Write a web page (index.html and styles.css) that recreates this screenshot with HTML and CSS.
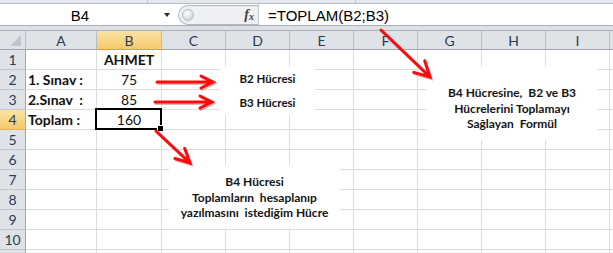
FILE: index.html
```html
<!DOCTYPE html>
<html>
<head>
<meta charset="utf-8">
<link rel="stylesheet" href="styles.css">
</head>
<body>
<div class="app">
  <div class="ribbon"><span class="rdiv d1"></span><span class="rdiv d2"></span></div>
  <div class="fbar">
    <div class="namebox"><span class="nb-text">B4</span><span class="nb-arrow"></span></div>
    <div class="fxzone"><span class="knob"></span><span class="fx"><i>f</i><sub>x</sub></span></div>
    <div class="formula">=TOPLAM(B2;B3)</div>
  </div>
  <div class="gap"></div>
  <div class="sheet">
    <div class="ch corner"><svg width="25" height="19" viewBox="0 0 25 19"><polygon points="10,15 21,15 21,4" fill="#bfc5cc"/></svg></div>
    <div class="ch">A</div><div class="ch hl">B</div><div class="ch">C</div><div class="ch">D</div><div class="ch">E</div><div class="ch">F</div><div class="ch">G</div><div class="ch">H</div><div class="ch">I</div><div class="ch last"></div>

    <div class="rh">1</div><div class="c"></div><div class="c b ctr">AHMET</div><div class="c"></div><div class="c"></div><div class="c"></div><div class="c"></div><div class="c"></div><div class="c"></div><div class="c"></div><div class="c"></div>
    <div class="rh">2</div><div class="c b">1. Sınav :</div><div class="c ctr">75</div><div class="c"></div><div class="c"></div><div class="c"></div><div class="c"></div><div class="c"></div><div class="c"></div><div class="c"></div><div class="c"></div>
    <div class="rh">3</div><div class="c b">2.Sınav  :</div><div class="c ctr">85</div><div class="c"></div><div class="c"></div><div class="c"></div><div class="c"></div><div class="c"></div><div class="c"></div><div class="c"></div><div class="c"></div>
    <div class="rh hl">4</div><div class="c b">Toplam :</div><div class="c ctr active">160<span class="sel"><span class="handle"></span></span></div><div class="c"></div><div class="c"></div><div class="c"></div><div class="c"></div><div class="c"></div><div class="c"></div><div class="c"></div><div class="c"></div>
    <div class="rh">5</div><div class="c"></div><div class="c"></div><div class="c"></div><div class="c"></div><div class="c"></div><div class="c"></div><div class="c"></div><div class="c"></div><div class="c"></div><div class="c"></div>
    <div class="rh">6</div><div class="c"></div><div class="c"></div><div class="c"></div><div class="c"></div><div class="c"></div><div class="c"></div><div class="c"></div><div class="c"></div><div class="c"></div><div class="c"></div>
    <div class="rh">7</div><div class="c"></div><div class="c"></div><div class="c"></div><div class="c"></div><div class="c"></div><div class="c"></div><div class="c"></div><div class="c"></div><div class="c"></div><div class="c"></div>
    <div class="rh">8</div><div class="c"></div><div class="c"></div><div class="c"></div><div class="c"></div><div class="c"></div><div class="c"></div><div class="c"></div><div class="c"></div><div class="c"></div><div class="c"></div>
    <div class="rh">9</div><div class="c"></div><div class="c"></div><div class="c"></div><div class="c"></div><div class="c"></div><div class="c"></div><div class="c"></div><div class="c"></div><div class="c"></div><div class="c"></div>
    <div class="rh">10</div><div class="c"></div><div class="c"></div><div class="c"></div><div class="c"></div><div class="c"></div><div class="c"></div><div class="c"></div><div class="c"></div><div class="c"></div><div class="c"></div>
    <div class="rh"></div><div class="c"></div><div class="c"></div><div class="c"></div><div class="c"></div><div class="c"></div><div class="c"></div><div class="c"></div><div class="c"></div><div class="c"></div><div class="c"></div>
  </div>

  <div class="note note-b23">B2 Hücresi
B3 Hücresi</div>
  <div class="note note-formula">B4 Hücresine,  B2 ve B3
Hücrelerini Toplamayı
Sağlayan  Formül</div>
  <div class="note note-b4">B4 Hücresi
Toplamların  hesaplanıp
yazılmasını  istediğim Hücre</div>

  <svg class="arrows" width="613" height="253" viewBox="0 0 613 253">
    <g class="shadow" transform="translate(1,1.5)">
      <path d="M381 30 L429 76 M413.7 72.4 L430 77 L424.7 60.8"/>
      <path d="M157 82 L212 82 M201 76 L213 82 L201 88"/>
      <path d="M155 102 L211 102 M200 96 L212 102 L200 108"/>
      <path d="M156 131 L189 162 M175 158.5 L190 163 L184.6 148.3"/>
    </g>
    <g class="red">
      <path d="M381 30 L429 76 M413.7 72.4 L430 77 L424.7 60.8"/>
      <path d="M157 82 L212 82 M201 76 L213 82 L201 88"/>
      <path d="M155 102 L211 102 M200 96 L212 102 L200 108"/>
      <path d="M156 131 L189 162 M175 158.5 L190 163 L184.6 148.3"/>
    </g>
  </svg>
</div>
</body>
</html>
```

FILE: styles.css
```css
html, body {
  margin: 0;
  padding: 0;
  background: #ffffff;
  overflow: hidden;
}

.app {
  position: relative;
  width: 613px;
  height: 253px;
  overflow: hidden;
  font-family: Lato, "Liberation Sans", sans-serif;
}

.ribbon {
  height: 3px;
  background: #e4e7eb;
  border-bottom: 1px solid #b7bcc4;
  display: flex;
}

.rdiv {
  width: 1px;
  height: 3px;
  background: #c3c8cf;
}

.d1 { margin-left: 147px; }
.d2 { margin-left: 207px; }

.fbar {
  height: 22px;
  box-sizing: border-box;
  border-bottom: 1px solid #a9afb7;
  display: flex;
  background: #ffffff;
}

.namebox {
  width: 178px;
  display: flex;
  align-items: center;
  background: #ffffff;
}

.nb-text {
  width: 160px;
  text-align: center;
  font: 15px "Liberation Sans", Arial, sans-serif;
  color: #000;
  padding-top: 2px;
}

.nb-arrow {
  width: 0;
  height: 0;
  margin-left: 4px;
  margin-top: 1px;
  border-left: 3.5px solid transparent;
  border-right: 3.5px solid transparent;
  border-top: 4px solid #2b2b2b;
}

.fxzone {
  width: 80px;
  box-sizing: border-box;
  border: 1px solid #b3b8bf;
  border-right: none;
  border-radius: 11px 0 0 11px;
  background: #eef0f3;
  display: flex;
  align-items: center;
  margin-top: 1px;
  height: 20px;
}

.knob {
  width: 12px;
  height: 12px;
  border-radius: 50%;
  margin-left: 3px;
  box-sizing: border-box;
  border: 1px solid #b8bdc4;
  background: radial-gradient(circle at 40% 35%, #ffffff 0%, #e3e6ea 45%, #c3c8ce 100%);
}

.fx {
  margin-left: auto;
  margin-right: 4px;
  font: italic bold 14px "Liberation Serif", "DejaVu Serif", serif;
  color: #404040;
  line-height: 1;
}

.fx i { font-style: italic; }

.fx sub {
  font-size: 10px;
  vertical-align: -1px;
}

.formula {
  flex: 1;
  border-left: 1px solid #c6cbd1;
  padding-left: 9px;
  display: flex;
  align-items: center;
  padding-top: 2px;
  font: 15px "Liberation Sans", Arial, sans-serif;
  color: #000;
}

.gap {
  height: 4px;
  background: #dde1e6;
}

.sheet {
  display: grid;
  grid-template-columns: 26px 71px 65px repeat(7, 64px) 1fr;
  grid-auto-rows: 20px;
}

.ch, .rh {
  box-sizing: border-box;
  background: #dfe3e8;
  color: #283c55;
  font-size: 14px;
  display: flex;
  align-items: center;
  justify-content: center;
}

.ch {
  border-top: 1px solid #a9b0b8;
  border-right: 1px solid #b7bdc5;
  border-bottom: 1px solid #9ea6b0;
}

.rh {
  border-right: 1px solid #9ea6b0;
  border-bottom: 1px solid #c3c8ce;
}

.corner {
  align-items: flex-start;
  justify-content: flex-start;
}

.ch.hl {
  background: linear-gradient(#fbe3a4, #f5c96d);
  border-right-color: #e8b35d;
  border-bottom: 1px solid #f29436;
}

.rh.hl {
  background: linear-gradient(#fbe3a4, #f5c96d);
  border-right: 1px solid #f29436;
  border-bottom-color: #e8b35d;
}

.c {
  box-sizing: border-box;
  border-right: 1px solid #dadcdd;
  border-bottom: 1px solid #dadcdd;
  display: flex;
  align-items: center;
  padding: 0 2px;
  font-size: 14px;
  color: #111;
  white-space: pre;
}

.c.b { font-weight: bold; }
.c.ctr { justify-content: center; }

.active { position: relative; }

.sel {
  position: absolute;
  left: -2px;
  top: -2px;
  right: -1px;
  bottom: -1px;
  border: 2px solid #000;
}

.handle {
  position: absolute;
  right: -4px;
  bottom: -4px;
  width: 5px;
  height: 5px;
  background: #000;
  border: 1px solid #fff;
}

.note {
  position: absolute;
  background: #ffffff;
  font-weight: bold;
  font-size: 12px;
  color: #141414;
  text-align: center;
  white-space: pre;
  box-sizing: border-box;
}

.note-b23 {
  left: 220px;
  top: 67px;
  width: 95px;
  height: 48px;
  line-height: 24px;
  font-size: 11.5px;
}

.note-formula {
  left: 427px;
  top: 67px;
  width: 170px;
  height: 73px;
  padding-top: 18px;
  line-height: 15.5px;
}

.note-b4 {
  left: 169px;
  top: 165px;
  width: 171px;
  height: 63px;
  padding-top: 9px;
  line-height: 15.5px;
}

.arrows {
  position: absolute;
  left: 0;
  top: 0;
  pointer-events: none;
}

.arrows path {
  fill: none;
  stroke-width: 3px;
  stroke-linecap: round;
  stroke-linejoin: miter;
}

.arrows .red path { stroke: #ff0a0a; }
.arrows .shadow path { stroke: #8a1010; opacity: 0.3; }
```
